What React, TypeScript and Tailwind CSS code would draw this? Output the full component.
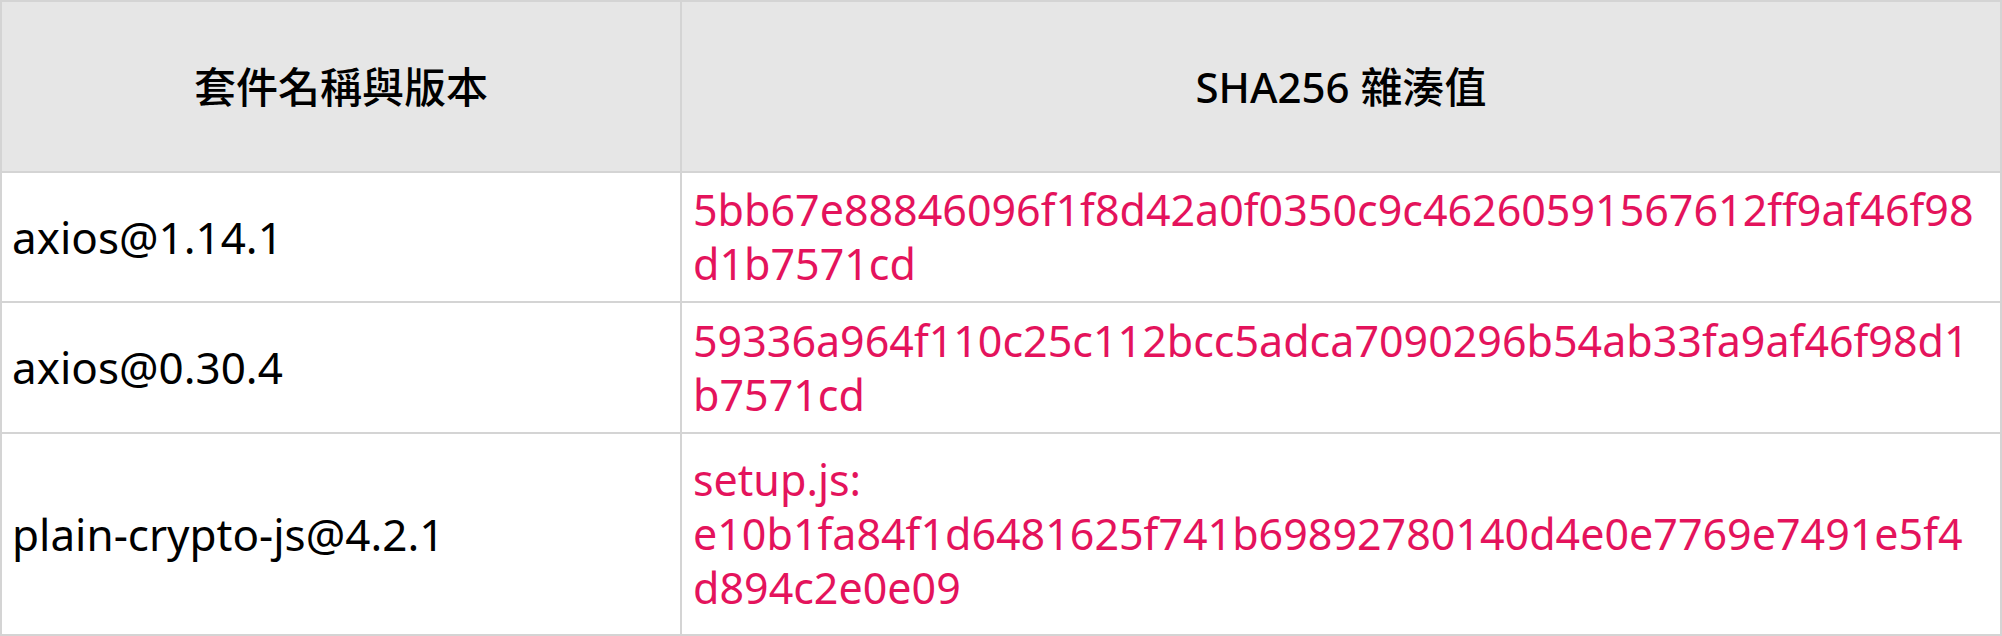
const rows = [
  {
    name: 'axios@1.14.1',
    hash: ['5bb67e88846096f1f8d42a0f0350c9c46260591567612ff9af46f98', 'd1b7571cd'],
    height: 'h-[130px]',
  },
  {
    name: 'axios@0.30.4',
    hash: ['59336a964f110c25c112bcc5adca7090296b54ab33fa9af46f98d1', 'b7571cd'],
    height: 'h-[131px]',
  },
  {
    name: 'plain-crypto-js@4.2.1',
    hash: ['setup.js:', 'e10b1fa84f1d6481625f741b69892780140d4e0e7769e7491e5f4', 'd894c2e0e09'],
    height: 'h-[202px]',
  },
];

export default function App() {
  return (
    <div className="w-[2002px] h-[636px] bg-white font-['Noto_Sans','Noto_Sans_CJK_TC',sans-serif]">
      <table className="w-full table-fixed border-collapse border-2 border-[#d4d4d4]">
        <colgroup>
          <col className="w-[680px]" />
          <col />
        </colgroup>
        <thead>
          <tr className="h-[171px] bg-[#e6e6e6]">
            <th className="border-2 border-[#d4d4d4] text-center align-middle text-[42px] font-medium text-black">
              套件名稱與版本
            </th>
            <th className="border-2 border-[#d4d4d4] text-center align-middle text-[42px] font-medium text-black">
              SHA256 雜湊值
            </th>
          </tr>
        </thead>
        <tbody>
          {rows.map(row => (
            <tr key={row.name} className={row.height}>
              <td className="border-2 border-[#d4d4d4] pl-[10px] align-middle text-[44px] leading-[55px] text-black">
                {row.name}
              </td>
              <td className="border-2 border-[#d4d4d4] pl-[11px] align-middle text-[43px] leading-[54px] text-[#e4135c] whitespace-nowrap">
                {row.hash.map(part => (
                  <div key={part}>{part}</div>
                ))}
              </td>
            </tr>
          ))}
        </tbody>
      </table>
    </div>
  );
}
